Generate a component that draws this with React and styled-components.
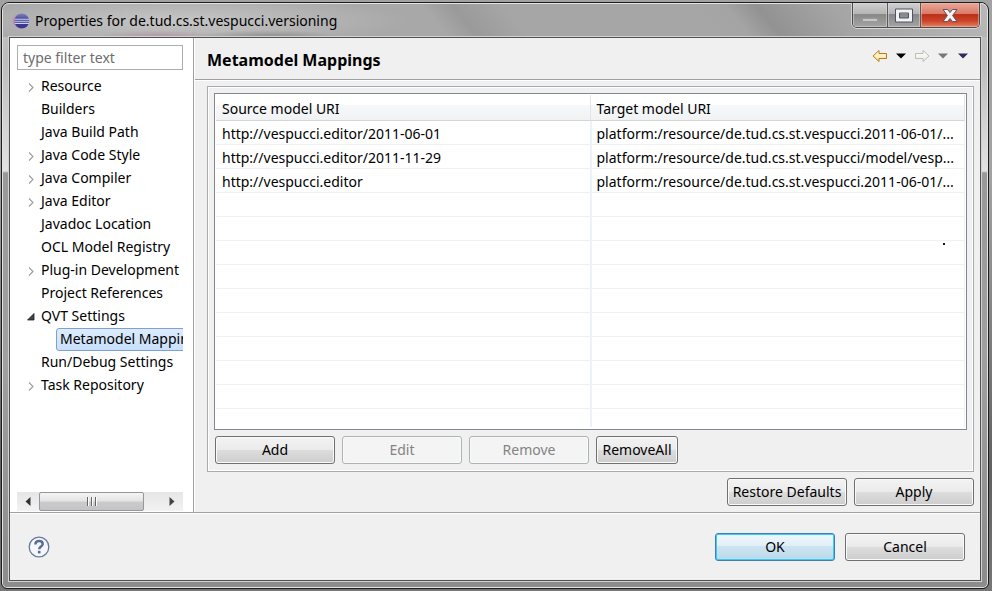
import React from "react";
import styled, { createGlobalStyle, css } from "styled-components";

const GlobalStyle = createGlobalStyle`
  *, *::before, *::after { box-sizing: border-box; }
  body {
    margin: 0;
    background: #8c8c8c;
    color: #000;
    font: 14px/20px "Noto Sans", "Open Sans", sans-serif;
  }
  button, input { font: inherit; color: inherit; margin: 0; }
`;

const Desktop = styled.div`
  min-height: 100vh;
  display: flex;
  padding: 2px 3px 2px 1px;
  background: linear-gradient(#a2a2a2 0 30%, #606060 80%, #777);
`;

const Window = styled.div`
  flex: 1;
  min-width: 0;
  display: flex;
  flex-direction: column;
  padding: 0 7px 7px;
  border: 1px solid #1c1c1c;
  border-radius: 8px 8px 6px 6px;
  box-shadow: inset 0 0 0 1px #e4e4e4;
  background:
    linear-gradient(#c0c0c0 0, #bdbdbd 60px, #e2e2e2 168px, #999 170px, #a0a0a0 60%, #8c8c8c 100%);
`;

const TitleBar = styled.header`
  display: flex;
  align-items: flex-start;
  justify-content: space-between;
  height: 34px;
  margin: 0 -6px;
  padding-left: 9px;
  padding-right: 6px;
  border-radius: 6px 6px 0 0;
  border-top: 1px solid #e4e4e4;
  background:
    radial-gradient(ellipse 60px 7px at 155px 33px, #a87c9488, transparent),
    radial-gradient(ellipse 70px 7px at 265px 33px, #76767699, transparent),
    radial-gradient(ellipse 230px 26px at 175px 17px, #c6c6c6, transparent),
    linear-gradient(50deg, #a8a8a8 0 44%, #9a9a9a 47%, #a6a6a6 52% 70%, #a4a4a4 74%, #929292 77%, #a4a4a4 84%, #b8b8b8);
`;

const Caption = styled.div`
  display: flex;
  align-items: center;
  gap: 5px;
  height: 34px;
`;

const WindowTitle = styled.h1`
  margin: 0;
  font-size: 14px;
  font-weight: 400;
`;

const WindowControls = styled.div`
  display: flex;
  height: 25px;
  margin-top: -1px;
  margin-right: 1px;
  border: 1px solid #4c4c4c;
  border-top: 0;
  border-radius: 0 0 5px 5px;
  overflow: hidden;
  box-shadow: 0 1px 0 #d8d8d8, 1px 0 0 #d8d8d8, -1px 0 0 #d0d0d0;
`;

const WindowControl = styled.button`
  display: grid;
  place-items: center;
  width: ${(p) => p.$width}px;
  padding: 0;
  border: 0;
  border-right: 1px solid #5a5a5a;
  background: linear-gradient(#d0d0d0, #b4b4b4 46%, #888 48%, #a4a4a4);
  box-shadow: inset 0 0 0 1px #dcdcdc88;
  &:last-child { border-right: 0; }
  ${(p) =>
    p.$close &&
    css`
      background: linear-gradient(#eaa898, #da7866 46%, #b8301a 48%, #cf4428 75%, #e08468);
      box-shadow: inset 0 0 0 1px #f4c0b488;
    `}
`;

const Client = styled.main`
  flex: 1;
  display: flex;
  flex-direction: column;
  border: 1px solid #505050;
  outline: 1px solid #d2d2d2;
  background: #f0f0f0;
`;

const Panes = styled.div`
  flex: 1;
  display: flex;
  min-height: 0;
  border-bottom: 1px solid #a0a0a0;
`;

const Sidebar = styled.nav`
  flex: none;
  width: 184px;
  display: flex;
  flex-direction: column;
  padding: 7px 10px 1px 7px;
  border-right: 1px solid #a0a0a0;
  background: #fff;
`;

const FilterInput = styled.input`
  width: 100%;
  height: 25px;
  padding: 0 5px;
  border: 1px solid #abadb3;
  border-radius: 0;
  background: #fff;
  outline: 0;
  &::placeholder { color: #6d6d6d; opacity: 1; }
`;

const Tree = styled.ul`
  flex: 1;
  margin: 0;
  padding: 5px 0 0;
  list-style: none;
  overflow: hidden;
`;

const TreeRow = styled.li`
  display: flex;
  align-items: center;
  height: 23px;
  padding-left: ${(p) => (p.$nested ? 39 : 10)}px;
  white-space: nowrap;
`;

const Twisty = styled.span`
  flex: none;
  display: grid;
  place-items: center;
  width: 8px;
  height: 10px;
  margin-right: 3px;
`;

const TreeLabel = styled.span`
  height: 23px;
  padding: 0 3px;
  line-height: 22px;
  ${(p) =>
    p.$selected &&
    css`
      border: 1px solid #7da2ce;
      border-radius: 3px;
      line-height: 20px;
      background: linear-gradient(#dcebfc, #c8e0fc);
    `}
`;

const ScrollBar = styled.div`
  display: flex;
  align-items: stretch;
  height: 19px;
  background: linear-gradient(#e6e6e6, #f2f2f2);
`;

const ScrollArrow = styled.button`
  display: grid;
  place-items: center;
  width: 22px;
  padding: 0;
  border: 0;
  background: none;
`;

const ScrollTrack = styled.div`
  flex: 1;
`;

const ScrollThumb = styled.div`
  display: grid;
  place-items: center;
  width: 86%;
  height: 100%;
  border: 1px solid #979797;
  border-radius: 2px;
  background: linear-gradient(#f4f4f4, #e4e4e5 48%, #cbcbcd 52%, #c4c4c8);
`;

const Page = styled.section`
  flex: 1;
  min-width: 0;
  display: flex;
  flex-direction: column;
  border-left: 1px solid #fff;
`;

const PageHeader = styled.div`
  display: flex;
  align-items: center;
  justify-content: space-between;
  height: 42px;
  padding: 0 8px 0 12px;
  border-bottom: 1px solid #a0a0a0;
  box-shadow: 0 1px 0 #fff;
`;

const PageTitle = styled.h2`
  margin: 0;
  padding-top: 2px;
  font-size: 16px;
  font-weight: 700;
`;

const HistoryTools = styled.div`
  display: flex;
  align-items: center;
  margin-top: -6px;
`;

const ToolButton = styled.button`
  display: grid;
  place-items: center;
  width: ${(p) => p.$width}px;
  height: 20px;
  padding: 0;
  border: 0;
  background: none;
`;

const PageBody = styled.div`
  flex: 1;
  display: flex;
  flex-direction: column;
  gap: 6px;
  padding: 6px 6px;
  padding-left: 12px;
`;

const Group = styled.div`
  flex: 1;
  display: flex;
  flex-direction: column;
  gap: 6px;
  padding: 6px 6px 7px;
  border: 1px solid #a8abb0;
  box-shadow: inset 0 0 0 1px #fff;
`;

const TableFrame = styled.div`
  flex: 1;
  position: relative;
  padding: 1px;
  border: 1px solid #828790;
  background: #fff;
  overflow: hidden;
`;

const MappingTable = styled.table`
  width: 100%;
  table-layout: fixed;
  border-collapse: separate;
  border-spacing: 0;
`;

const HeadCell = styled.th`
  height: 26px;
  padding: 2px 6px 0;
  border-right: 1px solid #e2e4e8;
  border-bottom: 1px solid #d5d5d5;
  background: linear-gradient(#fff 38%, #f7f8fa 40%, #f1f2f4);
  font-weight: 400;
  text-align: left;
`;

const Cell = styled.td`
  height: 24px;
  padding: 2px 6px 0;
  border-bottom: 1px solid #f0f0f0;
  white-space: nowrap;
  overflow: hidden;
  &:first-child { box-shadow: inset -1px 0 0 #edf1fa; }
  &:last-child { border-left: 1px solid #edf1fa; padding-left: 5px; border-right: 1px solid #edf1fa; }
  tr:last-child > & { height: 18px; border-bottom: 0; }
`;

const Speck = styled.i`
  position: absolute;
  right: 21px;
  top: 149px;
  width: 2px;
  height: 2px;
  background: #111;
`;

const ButtonRow = styled.div`
  display: flex;
  gap: 7px;
  padding: ${(p) => (p.$end ? "0" : "0 1px")};
  justify-content: ${(p) => (p.$end ? "flex-end" : "flex-start")};
`;

const PushButton = styled.button`
  width: ${(p) => (p.$compact ? "82px" : "120px")};
  height: 28px;
  padding: 0;
  border: 1px solid #707070;
  border-radius: 3px;
  background: linear-gradient(#f3f3f3, #ebebeb 48%, #dddddd 50%, #cdcdcd);
  box-shadow: inset 0 0 0 1px #fafafa;
  line-height: 26px;
  white-space: nowrap;
  &:disabled {
    border-color: #adb2b5;
    background: #f4f4f4;
    color: #838383;
  }
  ${(p) =>
    p.$primary &&
    css`
      border-color: #3c7fb1;
      background: linear-gradient(#eef6fb, #e2eff8 46%, #cde4f0 48%, #bad9ea);
      box-shadow: inset 0 0 0 1px #3ccbf4;
    `}
`;

const Footer = styled.footer`
  display: flex;
  align-items: center;
  justify-content: space-between;
  height: 67px;
  padding: 0 15px 0 18px;
  border-top: 1px solid #fff;
`;

const HelpButton = styled.button`
  display: grid;
  padding: 0;
  border: 0;
  border-radius: 50%;
  background: none;
`;

const DialogActions = styled.div`
  display: flex;
  gap: 10px;
`;

const TREE = [
  { label: "Resource", state: "closed" },
  { label: "Builders" },
  { label: "Java Build Path" },
  { label: "Java Code Style", state: "closed" },
  { label: "Java Compiler", state: "closed" },
  { label: "Java Editor", state: "closed" },
  { label: "Javadoc Location" },
  { label: "OCL Model Registry" },
  { label: "Plug-in Development", state: "closed" },
  { label: "Project References" },
  { label: "QVT Settings", state: "open" },
  { label: "Metamodel Mappings", nested: true, selected: true },
  { label: "Run/Debug Settings" },
  { label: "Task Repository", state: "closed" },
];

const MAPPINGS = [
  ["http://vespucci.editor/2011-06-01", "platform:/resource/de.tud.cs.st.vespucci.2011-06-01/..."],
  ["http://vespucci.editor/2011-11-29", "platform:/resource/de.tud.cs.st.vespucci/model/vesp..."],
  ["http://vespucci.editor", "platform:/resource/de.tud.cs.st.vespucci.2011-06-01/..."],
];
const EMPTY_ROWS = Array.from({ length: 10 }, () => ["", ""]);

function EclipseIcon() {
  return (
    <svg width="18" height="16" viewBox="0 0 18 16" aria-hidden="true">
      <defs>
        <linearGradient id="sphere" x1="0" y1="0" x2="0" y2="1">
          <stop offset="0" stopColor="#7d7fc4" />
          <stop offset="0.5" stopColor="#3b3a8c" />
          <stop offset="1" stopColor="#3a3490" />
        </linearGradient>
      </defs>
      <ellipse cx="8" cy="8" rx="7.6" ry="7" fill="#c08aa8" opacity="0.75" />
      <circle cx="9.8" cy="8" r="7.4" fill="url(#sphere)" />
      <path d="M2.6 6.2h14.6M2.3 8.3h15M2.8 10.4h14.2" stroke="#c9cff0" strokeWidth="1.1" />
    </svg>
  );
}

function NavArrow({ forward }) {
  const id = forward ? "arrow-next" : "arrow-back";
  return (
    <svg width="16" height="14" viewBox="0 0 16 14" aria-hidden="true">
      <defs>
        <linearGradient id={id} x1="0" y1="0" x2="0" y2="1">
          <stop offset="0" stopColor={forward ? "#fff" : "#fffef0"} />
          <stop offset="1" stopColor={forward ? "#e8e8e2" : "#fbe28c"} />
        </linearGradient>
      </defs>
      <path
        d="M1 7L7 1.5V4.5H14.5V9.5H7V12.5Z"
        transform={forward ? "matrix(-1 0 0 1 16 0)" : undefined}
        fill={`url(#${id})`}
        stroke={forward ? "#bcbcb8" : "#b8791c"}
        strokeLinejoin="round"
      />
    </svg>
  );
}

function Caret({ color }) {
  return (
    <svg width="10" height="6" viewBox="0 0 10 6" aria-hidden="true">
      <path d="M0 .5H10L5 5.5Z" fill={color} />
    </svg>
  );
}

function TreeTwisty({ state }) {
  return (
    <Twisty>
      {state === "closed" && (
        <svg width="8" height="10" viewBox="0 0 8 10" aria-hidden="true">
          <path d="M2 1.5L6 5.5L2 9.5" fill="none" stroke="#9c9c9c" strokeWidth="1.1" />
        </svg>
      )}
      {state === "open" && (
        <svg width="8" height="10" viewBox="0 0 8 10" aria-hidden="true">
          <path d="M7 1.5V8H.5Z" fill="#404040" stroke="#222" strokeWidth=".8" />
        </svg>
      )}
    </Twisty>
  );
}

export default function App() {
  return (
    <Desktop>
      <GlobalStyle />
      <Window>
        <TitleBar>
          <Caption>
            <EclipseIcon />
            <WindowTitle>Properties for de.tud.cs.st.vespucci.versioning</WindowTitle>
          </Caption>
          <WindowControls>
            <WindowControl $width={35} aria-label="Minimize">
              <svg width="18" height="18" viewBox="0 0 18 18" aria-hidden="true">
                <rect x="1.5" y="12.5" width="15" height="3" fill="#c6c6c6" stroke="#999" />
              </svg>
            </WindowControl>
            <WindowControl $width={33} aria-label="Maximize">
              <svg width="18" height="15" viewBox="0 0 18 15" aria-hidden="true">
                <path
                  d="M.5 1H17.5V14H.5ZM4.5 5V10H13.5V5Z"
                  fill="#f2f2f2"
                  fillRule="evenodd"
                  stroke="#50546a"
                />
              </svg>
            </WindowControl>
            <WindowControl $width={58} $close aria-label="Close">
              <svg width="16" height="15" viewBox="0 0 16 15" aria-hidden="true">
                <path
                  d="M1 1.5H5.5L8 4.5L10.5 1.5H15L10.6 7.5L15 13.5H10.5L8 10.5L5.5 13.5H1L5.4 7.5Z"
                  fill="#f4f4f4"
                  stroke="#5c5468"
                  strokeLinejoin="round"
                />
              </svg>
            </WindowControl>
          </WindowControls>
        </TitleBar>

        <Client>
          <Panes>
            <Sidebar aria-label="Property pages">
              <FilterInput type="text" placeholder="type filter text" aria-label="Filter" />
              <Tree>
                {TREE.map((item) => (
                  <TreeRow key={item.label} $nested={item.nested}>
                    {!item.nested && <TreeTwisty state={item.state} />}
                    <TreeLabel $selected={item.selected}>{item.label}</TreeLabel>
                  </TreeRow>
                ))}
              </Tree>
              <ScrollBar>
                <ScrollArrow aria-label="Scroll left">
                  <svg width="6" height="9" viewBox="0 0 6 9" aria-hidden="true">
                    <path d="M5.5 0V9L.5 4.5Z" fill="#333" />
                  </svg>
                </ScrollArrow>
                <ScrollTrack>
                  <ScrollThumb>
                    <svg width="11" height="9" viewBox="0 0 11 9" aria-hidden="true">
                      <path d="M1.5 0V9M5.5 0V9M9.5 0V9" stroke="#666" />
                      <path d="M2.5 0V9M6.5 0V9M10.5 0V9" stroke="#fff" />
                    </svg>
                  </ScrollThumb>
                </ScrollTrack>
                <ScrollArrow aria-label="Scroll right">
                  <svg width="6" height="9" viewBox="0 0 6 9" aria-hidden="true">
                    <path d="M.5 0V9L5.5 4.5Z" fill="#444" />
                  </svg>
                </ScrollArrow>
              </ScrollBar>
            </Sidebar>

            <Page>
              <PageHeader>
                <PageTitle>Metamodel Mappings</PageTitle>
                <HistoryTools>
                  <ToolButton $width={20} aria-label="Back"><NavArrow /></ToolButton>
                  <ToolButton $width={22} aria-label="Back history"><Caret color="#000" /></ToolButton>
                  <ToolButton $width={20} aria-label="Forward"><NavArrow forward /></ToolButton>
                  <ToolButton $width={22} aria-label="Forward history"><Caret color="#77777a" /></ToolButton>
                  <ToolButton $width={18} aria-label="Menu"><Caret color="#2c2860" /></ToolButton>
                </HistoryTools>
              </PageHeader>
              <PageBody>
                <Group>
                  <TableFrame>
                    <MappingTable>
                      <thead>
                        <tr>
                          <HeadCell scope="col">Source model URI</HeadCell>
                          <HeadCell scope="col">Target model URI</HeadCell>
                        </tr>
                      </thead>
                      <tbody>
                        {[...MAPPINGS, ...EMPTY_ROWS].map(([source, target], i) => (
                          <tr key={i}>
                            <Cell>{source}</Cell>
                            <Cell>{target}</Cell>
                          </tr>
                        ))}
                      </tbody>
                    </MappingTable>
                    <Speck />
                  </TableFrame>
                  <ButtonRow>
                    <PushButton>Add</PushButton>
                    <PushButton disabled>Edit</PushButton>
                    <PushButton disabled>Remove</PushButton>
                    <PushButton $compact>RemoveAll</PushButton>
                  </ButtonRow>
                </Group>
                <ButtonRow $end>
                  <PushButton>Restore Defaults</PushButton>
                  <PushButton>Apply</PushButton>
                </ButtonRow>
              </PageBody>
            </Page>
          </Panes>

          <Footer>
            <HelpButton aria-label="Help">
              <svg width="22" height="22" viewBox="0 0 22 22" aria-hidden="true">
                <circle cx="11" cy="11" r="9.8" fill="#f6f7fa" stroke="#64789c" strokeWidth="1.3" />
                <path
                  d="M7.4 8.4C7.4 6 9 5 11.1 5C13.3 5 14.7 6.2 14.7 8C14.7 10.4 11.2 10.6 11.2 13.2"
                  fill="none"
                  stroke="#5a6c96"
                  strokeWidth="2.4"
                />
                <rect x="9.9" y="14.8" width="2.6" height="2.6" fill="#5a6c96" />
              </svg>
            </HelpButton>
            <DialogActions>
              <PushButton $primary>OK</PushButton>
              <PushButton>Cancel</PushButton>
            </DialogActions>
          </Footer>
        </Client>
      </Window>
    </Desktop>
  );
}
